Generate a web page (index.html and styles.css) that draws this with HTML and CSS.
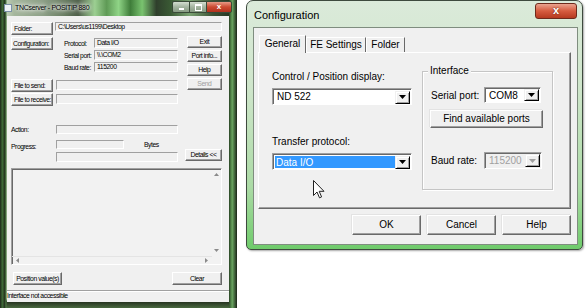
FILE: index.html
```html
<!DOCTYPE html>
<html lang="en">
<head>
    <meta charset="UTF-8">
    <title>TNCserver - Configuration</title>
    <link rel="stylesheet" href="styles.css">
</head>
<body>
    <div class="desk">
        <div class="tnc">
            <div class="tnc-title">
                <span class="app-icon"></span>
                <span class="tnc-name">TNCserver - POSITIP 880</span>
                <div class="tnc-ctrls">
                    <span class="tc tc-min"><span class="glyph-min"></span></span>
                    <span class="tc tc-max"><span class="glyph-max"></span></span>
                    <span class="tc tc-close">x</span>
                </div>
            </div>
            <div class="tnc-client">
                <div class="tnc-body">
                    <div class="row folder-row">
                        <div class="cbtn wide">Folder:</div>
                        <div class="fld path">C:\Users\us1199\Desktop</div>
                    </div>
                    <div class="row main-row">
                        <div class="tnc-left">
                            <div class="row">
                                <div class="cbtn wide cfg-btn">Configuration:</div>
                                <div class="info">
                                    <div class="info-row"><span class="info-label">Protocol:</span><span class="fld info-val">Data I/O</span></div>
                                    <div class="info-row"><span class="info-label">Serial port:</span><span class="fld info-val">\\.\COM2</span></div>
                                    <div class="info-row"><span class="info-label">Baud rate:</span><span class="fld info-val">115200</span></div>
                                </div>
                            </div>
                            <div class="row file-row first">
                                <div class="cbtn wide">File to send:</div>
                                <div class="fld file-fld"></div>
                            </div>
                            <div class="row file-row">
                                <div class="cbtn wide">File to receive:</div>
                                <div class="fld file-fld"></div>
                            </div>
                        </div>
                        <div class="tnc-right">
                            <div class="cbtn side">Exit</div>
                            <div class="cbtn side">Port info...</div>
                            <div class="cbtn side">Help</div>
                            <div class="cbtn side off">Send</div>
                        </div>
                    </div>
                    <div class="row act-row">
                        <span class="lbl">Action:</span>
                        <div class="fld long"></div>
                    </div>
                    <div class="row prog-row">
                        <span class="lbl">Progress:</span>
                        <div class="fld short"></div>
                        <span class="bytes">Bytes</span>
                    </div>
                    <div class="row det-row">
                        <span class="lbl"></span>
                        <div class="fld long"></div>
                        <div class="cbtn det">Details &lt;&lt;</div>
                    </div>
                    <div class="log">
                        <div class="log-text"></div>
                        <div class="vbar">
                            <svg width="5" height="3" viewBox="0 0 5 3"><path d="M2.5 0 L5 3 L0 3 Z" fill="#8a8a8a"/></svg>
                            <svg width="5" height="3" viewBox="0 0 5 3"><path d="M0 0 L5 0 L2.5 3 Z" fill="#8a8a8a"/></svg>
                        </div>
                        <div class="hbar">
                            <svg width="3" height="5" viewBox="0 0 3 5"><path d="M3 0 L3 5 L0 2.5 Z" fill="#8a8a8a"/></svg>
                            <svg width="3" height="5" viewBox="0 0 3 5"><path d="M0 0 L3 2.5 L0 5 Z" fill="#8a8a8a"/></svg>
                        </div>
                        <div class="corner"></div>
                    </div>
                    <div class="row bottom-row">
                        <div class="cbtn pos">Position value(s)</div>
                        <div class="cbtn clear">Clear</div>
                    </div>
                </div>
                <div class="status">Interface not accessible</div>
            </div>
        </div>

        <div class="cfg">
            <div class="cfg-title">
                <span class="cfg-name">Configuration</span>
                <span class="cfg-close">x</span>
            </div>
            <div class="cfg-client">
                <div class="tabs">
                    <div class="tab on tab-gen">General</div>
                    <div class="tab tab-fe">FE Settings</div>
                    <div class="tab tab-fold">Folder</div>
                </div>
                <div class="panel">
                    <div class="pcol">
                        <div class="plabel">Control / Position display:</div>
                        <div class="combo big">
                            <span class="combo-text">ND 522</span>
                            <span class="drop"><svg width="7" height="4" viewBox="0 0 7 4"><path d="M0 0 L7 0 L3.5 4 Z" fill="#000"/></svg></span>
                        </div>
                        <div class="plabel second">Transfer protocol:</div>
                        <div class="combo big">
                            <span class="sel">Data I/O</span>
                            <span class="drop"><svg width="7" height="4" viewBox="0 0 7 4"><path d="M0 0 L7 0 L3.5 4 Z" fill="#000"/></svg></span>
                        </div>
                        <svg class="cursor" width="12" height="19" viewBox="0 0 12 19"><path d="M0.5 0.5 L0.5 15.5 L4 12 L6.5 17.8 L8.6 16.9 L6.2 11.3 L11 11.3 Z" fill="#fff" stroke="#222" stroke-width="1" stroke-linejoin="round"/></svg>
                    </div>
                    <div class="group">
                        <span class="legend">Interface</span>
                        <div class="grow">
                            <span class="glabel">Serial port:</span>
                            <div class="combo small">
                                <span class="combo-text">COM8</span>
                                <span class="drop"><svg width="7" height="4" viewBox="0 0 7 4"><path d="M0 0 L7 0 L3.5 4 Z" fill="#000"/></svg></span>
                            </div>
                        </div>
                        <div class="wbtn find">Find available ports</div>
                        <div class="grow baud">
                            <span class="glabel">Baud rate:</span>
                            <div class="combo small off">
                                <span class="combo-text">115200</span>
                                <span class="drop"><svg width="7" height="4" viewBox="0 0 7 4"><path d="M0 0 L7 0 L3.5 4 Z" fill="#a0a0a0"/></svg></span>
                            </div>
                        </div>
                    </div>
                </div>
                <div class="cfg-actions">
                    <div class="wbtn act">OK</div>
                    <div class="wbtn act">Cancel</div>
                    <div class="wbtn act">Help</div>
                </div>
            </div>
        </div>
    </div>
</body>
</html>
```

FILE: styles.css
```css
body {
    margin: 0;
    background: #fff;
    font-family: "Liberation Sans", Arial, sans-serif;
    color: #000;
}
.desk {
    display: flex;
    align-items: flex-start;
    gap: 9px;
}

/* old TNCserver window */
.tnc {
    width: 237px;
    height: 308px;
    display: flex;
    flex-direction: column;
    background:
        linear-gradient(90deg, #1c2619 0, #3f6a38 1%, #25331f 2%, #4d7a45 2.5%, rgba(0,0,0,0) 3%, rgba(0,0,0,0) 96.6%, #3b6434 97%, #6aa460 98%, #1a2417 100%),
        linear-gradient(180deg, rgba(0,0,0,0) 0, rgba(0,0,0,0) 97%, #26321f 98%, #4a6a40 100%),
        linear-gradient(90deg, #d8e4d0 0, #a4b69c 6%, #8ea088 18%, #6d8266 26%, #4d5e48 33%, #9ccf92 40%, #5f9a56 45%, #8fd486 50%, #3f7d3a 55%, #79c36f 60%, #2f3f2c 66%, #3a5a34 72%, #7aa272 80%, #3a5034 90%, #1d2a1a 100%);
}
.tnc-title {
    height: 16px;
    flex-shrink: 0;
    display: flex;
    align-items: flex-start;
}
.app-icon {
    width: 6px;
    height: 6px;
    margin: 4px 0 0 4px;
    background: #eef2f6;
    border: 1px solid #7a8fa6;
}
.tnc-name {
    margin: 3px 0 0 3px;
    font-size: 7px;
    line-height: 9px;
    letter-spacing: -0.3px;
    text-shadow: 0 0 3px #fff, 0 0 5px #fff, 0 0 7px #fff;
}
.tnc-ctrls {
    margin: 1px 5px 0 auto;
    display: flex;
}
.tc {
    height: 12px;
    box-sizing: border-box;
    border: 1px solid #3a4a38;
    display: flex;
    align-items: center;
    justify-content: center;
}
.tc-min,
.tc-max {
    width: 17px;
    background: linear-gradient(#d3ddd0, #a4b4a0 50%, #869a82);
    border-right: none;
}
.tc-min {
    border-radius: 2px 0 0 2px;
}
.glyph-min {
    width: 5px;
    height: 2px;
    margin-top: 4px;
    background: #fff;
}
.glyph-max {
    width: 5px;
    height: 4px;
    border: 1px solid #fff;
    border-top-width: 2px;
}
.tc-close {
    width: 26px;
    border-radius: 0 2px 2px 0;
    background: linear-gradient(#e79a86, #cc4a31 50%, #b0301c);
    color: #fff;
    font-size: 8px;
    font-weight: bold;
    line-height: 10px;
}
.tnc-client {
    margin: 0 8px 0 7px;
    height: 286px;
    flex-shrink: 0;
    background: #f0f0f0;
    display: flex;
    flex-direction: column;
    font-size: 6.8px;
    letter-spacing: -0.45px;
}
.tnc-body {
    padding: 6px 7px 0 4px;
}
.row {
    display: flex;
    align-items: flex-start;
}
.cbtn {
    box-sizing: border-box;
    height: 13px;
    background: #f0f0f0;
    border: 1px solid;
    border-color: #fff #696969 #696969 #fff;
    box-shadow: inset -1px -1px 0 #a0a0a0;
    line-height: 11px;
    text-align: center;
    white-space: nowrap;
    overflow: hidden;
}
.cbtn.wide {
    width: 42px;
    text-align: left;
    padding-left: 2px;
}
.cbtn.cfg-btn {
    margin-top: 1px;
    padding-left: 1px;
}
.fld {
    box-sizing: border-box;
    height: 10px;
    border: 1px solid;
    border-color: #a0a0a0 #fff #fff #a0a0a0;
    background: #f0f0f0;
    line-height: 8px;
    padding-left: 2px;
    white-space: nowrap;
}
.folder-row {
    height: 13px;
}
.path {
    width: 167px;
    height: 9px;
    margin-left: 2px;
    line-height: 7px;
}
.main-row {
    margin-top: 1px;
    height: 70px;
}
.tnc-left {
    width: 171px;
}
.info {
    margin: 2px 0 0 11px;
}
.info-row {
    display: flex;
    align-items: center;
    height: 10px;
    margin-bottom: 2px;
}
.info-row:last-child {
    margin-bottom: 0;
}
.info-label {
    width: 30px;
}
.info-val {
    width: 84px;
}
.file-row {
    height: 13px;
}
.file-row.first {
    margin-top: 7px;
}
.file-row + .file-row {
    margin-top: 1px;
}
.file-fld {
    width: 122px;
    margin: 1px 0 0 3px;
}
.tnc-right {
    margin-left: 8px;
    width: 36px;
}
.cbtn.side {
    height: 12px;
    line-height: 10px;
    margin-bottom: 2px;
}
.cbtn.side.off {
    margin-top: 1px;
    color: #a0a0a0;
}
.lbl {
    width: 45px;
    flex-shrink: 0;
}
.act-row {
    margin-top: 19px;
    height: 9px;
    align-items: center;
}
.long {
    width: 122px;
    height: 9px;
}
.prog-row {
    margin-top: 6px;
    height: 9px;
    align-items: center;
}
.prog-row .lbl {
    position: relative;
    top: 2px;
}
.short {
    width: 68px;
    height: 9px;
}
.bytes {
    margin-left: 20px;
}
.det-row {
    height: 13px;
}
.det-row .long {
    margin-top: 3px;
    height: 10px;
}
.cbtn.det {
    width: 37px;
    height: 12px;
    line-height: 10px;
    margin-left: 7px;
}
.log {
    margin-top: 6px;
    height: 97px;
    box-sizing: border-box;
    border: 1px solid;
    border-color: #a0a0a0 #fff #fff #a0a0a0;
    box-shadow: inset 1px 1px 0 #696969;
    background: #f2f2f2;
    display: grid;
    grid-template-columns: 1fr 9px;
    grid-template-rows: 1fr 8px;
}
.vbar {
    display: flex;
    flex-direction: column;
    justify-content: space-between;
    align-items: center;
    padding: 4px 0;
}
.hbar {
    display: flex;
    justify-content: space-between;
    align-items: center;
    padding: 0 4px;
    border-top: 1px solid #e4e4e4;
}
.bottom-row {
    margin-top: 7px;
    height: 13px;
}
.cbtn.pos {
    width: 49px;
    margin-left: 2px;
}
.cbtn.clear {
    width: 50px;
    margin-left: auto;
}
.status {
    margin-top: 5px;
    height: 11px;
    box-sizing: border-box;
    border-top: 1px solid #a0a0a0;
    box-shadow: inset 0 1px 0 #fff;
    line-height: 10px;
}

/* configuration dialog */
.cfg {
    width: 337px;
    height: 250px;
    box-sizing: border-box;
    border: 1px solid #3e4a3e;
    border-radius: 7px 7px 5px 5px;
    background: linear-gradient(#dbeada, #cfe6cb 35%, #acdba6 75%, #6fcb6b 100%);
    box-shadow: 1px 1px 2px rgba(0, 0, 0, 0.35);
    display: flex;
    flex-direction: column;
}
.cfg-title {
    height: 26px;
    display: flex;
    align-items: flex-start;
}
.cfg-name {
    margin: 8px 0 0 7px;
    font-size: 11px;
    line-height: 13px;
}
.cfg-close {
    margin: 2px 5px 0 auto;
    width: 42px;
    height: 16px;
    box-sizing: border-box;
    border: 1px solid #6e2a1c;
    border-radius: 3px;
    background: linear-gradient(#eaa48f, #d65b3f 50%, #b63a20);
    color: #fff;
    font-size: 11px;
    font-weight: bold;
    line-height: 13px;
    text-align: center;
    text-shadow: 0 0 2px #5a1a0a;
}
.cfg-client {
    margin: 0 4px 0 6px;
    height: 218px;
    box-sizing: border-box;
    border: 1px solid #7f8d7f;
    background: #f0f0f0;
    padding: 7px 0 0 4px;
    font-size: 10px;
}
.tabs {
    display: flex;
    align-items: flex-end;
    height: 17px;
    margin-left: 1px;
}
.tab {
    box-sizing: border-box;
    height: 15px;
    border: 1px solid;
    border-bottom: none;
    border-color: #fff #696969 transparent #fff;
    line-height: 14px;
    text-align: center;
}
.tab.on {
    height: 18px;
    margin-bottom: -1px;
    background: #f0f0f0;
    position: relative;
    z-index: 1;
    line-height: 16px;
}
.tab-gen {
    width: 47px;
}
.tab-fe {
    width: 60px;
}
.tab-fold {
    width: 39px;
}
.panel {
    width: 313px;
    height: 157px;
    box-sizing: border-box;
    border: 1px solid;
    border-color: #fff #696969 #696969 #fff;
    box-shadow: inset -1px -1px 0 #a0a0a0;
    display: flex;
    align-items: flex-start;
}
.pcol {
    position: relative;
    margin-left: 13px;
    width: 140px;
    height: 150px;
}
.plabel {
    margin-top: 18px;
    line-height: 12px;
}
.plabel.second {
    margin-top: 31px;
}
.combo {
    box-sizing: border-box;
    height: 17px;
    border: 1px solid;
    border-color: #a0a0a0 #fff #fff #a0a0a0;
    box-shadow: inset 1px 1px 0 #696969;
    background: #fff;
    display: flex;
    align-items: center;
    padding: 1px;
    margin-top: 5px;
}
.combo.big {
    width: 140px;
}
.combo-text {
    padding-left: 3px;
}
.sel {
    flex: 1;
    align-self: stretch;
    margin: 1px 0 0 1px;
    padding-left: 1px;
    background: #3399ff;
    color: #fff;
    line-height: 13px;
}
.drop {
    margin-left: auto;
    width: 15px;
    height: 13px;
    box-sizing: border-box;
    background: #f0f0f0;
    border: 1px solid;
    border-color: #f0f0f0 #000 #000 #f0f0f0;
    box-shadow: inset 1px 1px 0 #fff, inset -1px -1px 0 #a0a0a0;
    display: flex;
    align-items: center;
    justify-content: center;
    margin-top: 1px;
}
.cursor {
    position: absolute;
    left: 41px;
    top: 127px;
}
.group {
    position: relative;
    margin: 18px 0 0 10px;
    width: 131px;
    height: 119px;
    box-sizing: border-box;
    border: 1px solid #c5c5c5;
    box-shadow: inset 1px 1px 0 #fff, 1px 1px 0 #fff;
    padding: 15px 0 0 8px;
}
.legend {
    position: absolute;
    top: -7px;
    left: 5px;
    padding: 0 2px;
    background: #f0f0f0;
    line-height: 12px;
}
.grow {
    display: flex;
    align-items: center;
}
.glabel {
    width: 53px;
    flex-shrink: 0;
}
.combo.small {
    width: 57px;
    height: 16px;
    margin-top: 0;
}
.combo.small .drop {
    height: 12px;
    margin-top: 0;
}
.combo.off {
    width: 58px;
    height: 17px;
    background: #f0f0f0;
    color: #a0a0a0;
}
.combo.off .drop {
    height: 13px;
}
.wbtn {
    box-sizing: border-box;
    background: #f0f0f0;
    border: 1px solid;
    border-color: #fff #696969 #696969 #fff;
    box-shadow: inset -1px -1px 0 #a0a0a0, -1px -1px 0 #e3e3e3;
    text-align: center;
}
.find {
    width: 113px;
    height: 18px;
    line-height: 16px;
    margin: 7px 0 0 -1px;
}
.baud {
    margin-top: 24px;
}
.cfg-actions {
    display: flex;
    justify-content: flex-end;
    gap: 6px;
    margin-top: 6px;
    padding-right: 6px;
}
.wbtn.act {
    width: 69px;
    height: 20px;
    line-height: 18px;
}
```
